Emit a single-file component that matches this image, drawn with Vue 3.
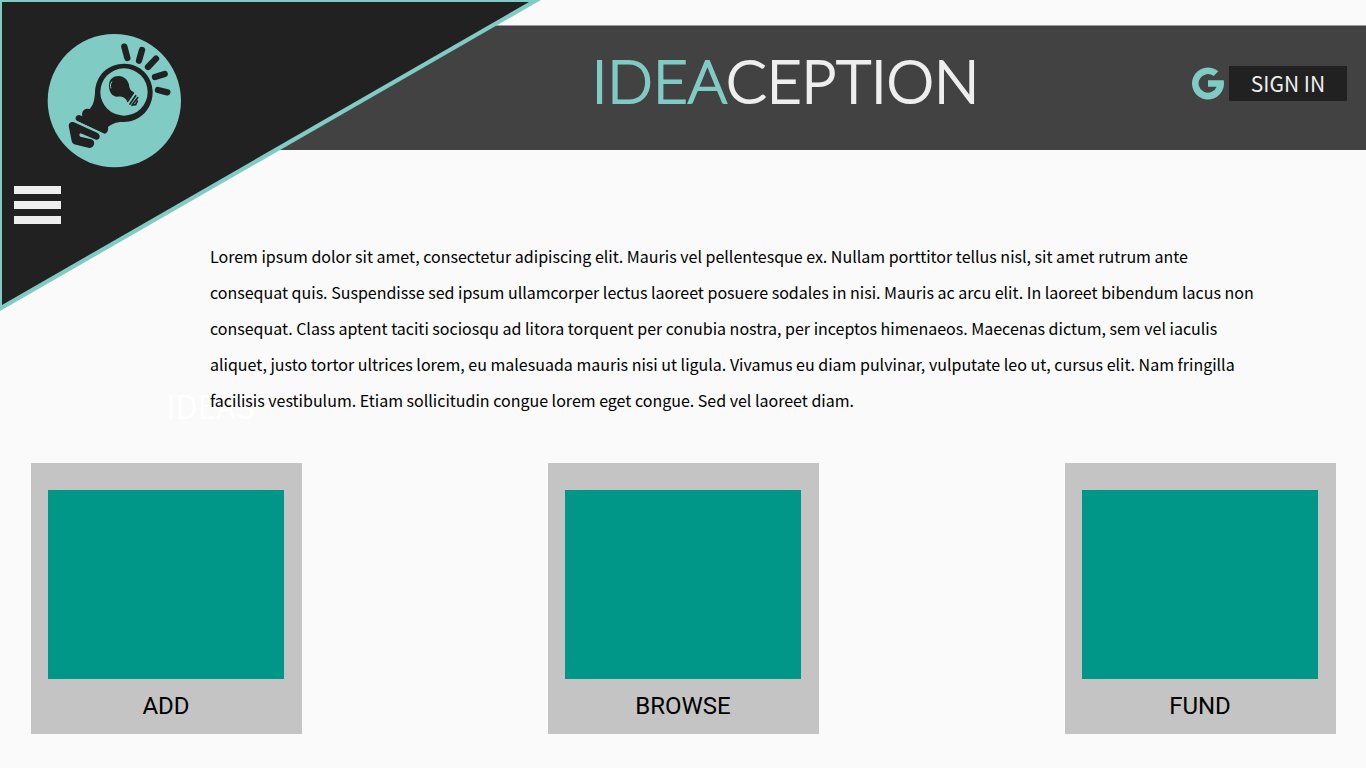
<script setup>
const cards = ['ADD', 'BROWSE', 'FUND']
</script>

<template>
  <div class="page">
    <header class="bar">
      <h1 class="brand"><span class="accent">IDEA</span>CEPTION</h1>
      <div class="account">
        <svg class="google" viewBox="0 0 96 99" aria-hidden="true">
          <path d="M79 13 65 27A28 28 0 1 0 74 59H48V40H95A48 48 0 1 1 79 13Z" />
        </svg>
        <button class="sign-in" type="button">SIGN IN</button>
      </div>
    </header>

    <nav class="corner" aria-label="Main">
      <svg class="triangle" viewBox="0 0 541 311" aria-hidden="true">
        <path class="edge" d="M0 0H541L0 311Z" />
        <path class="fill" d="M2 2H529L2 305Z" />
      </svg>
      <a class="logo" href="#" aria-label="Ideaception home">
        <svg viewBox="21 27 402 402" aria-hidden="true">
          <circle class="disc" cx="223" cy="227" r="200" />
          <g class="rays">
            <path d="M253 65 262 99M306 75 297 107M348 101 324 126M374 147 345 156M354 195 382 202" />
          </g>
          <path class="ink" d="M165 202C167 150 205 116 253 116C300 116 338 154 338 201C338 252 300 291 250 291C229 290 216 297 204 306C206 320 199 329 187 325L110 287C104 281 107 270 118 270L127 274C124 262 131 250 142 251L149 252C161 240 164 222 165 202Z" />
          <circle class="disc" cx="252" cy="201" r="71" />
          <path class="ink" d="M86 302C87 292 94 289 102 292L173 324C184 331 179 346 168 344L122 325C117 325 117 332 121 335L154 343C168 346 164 370 148 369L108 359C100 357 97 355 95 348Z" />
          <path class="gap" d="M104 287 191 327" />
          <path class="ink" d="M207 182C207 163 219 153 236 153C253 154 264 165 267 179C268 190 271 197 281 201L261 227C253 216 245 213 232 215C217 214 207 202 207 182Z" />
          <path class="thread" d="M280 204 263 229M287 212 270 237M293 218 276 241M292 228 287 239 276 240" />
          <path class="shine" d="M213 190C210 183 211 176 216 170" />
        </svg>
      </a>
      <button class="menu" type="button" aria-label="Menu">
        <span></span><span></span><span></span>
      </button>
    </nav>

    <main>
      <section class="intro">
        <h2 class="ghost">IDEAS</h2>
        <p>Lorem ipsum dolor sit amet, consectetur adipiscing elit. Mauris vel pellentesque ex. Nullam porttitor tellus nisl, sit amet rutrum ante consequat quis. Suspendisse sed ipsum ullamcorper lectus laoreet posuere sodales in nisi. Mauris ac arcu elit. In laoreet bibendum lacus non consequat. Class aptent taciti sociosqu ad litora torquent per conubia nostra, per inceptos himenaeos. Maecenas dictum, sem vel iaculis aliquet, justo tortor ultrices lorem, eu malesuada mauris nisi ut ligula. Vivamus eu diam pulvinar, vulputate leo ut, cursus elit. Nam fringilla facilisis vestibulum. Etiam sollicitudin congue lorem eget congue. Sed vel laoreet diam.</p>
      </section>

      <section class="cards">
        <a v-for="label in cards" :key="label" class="card" href="#">
          <span class="thumb"></span>
          <span class="label">{{ label }}</span>
        </a>
      </section>
    </main>
  </div>
</template>

<style>
body {
  background: #fafafa;
}
</style>

<style scoped>
.page {
  position: relative;
  display: flow-root;
  padding-bottom: 34px;
  font-family: "Noto Sans CJK SC", "Noto Sans", sans-serif;
  color: #000;
}
.bar {
  box-sizing: border-box;
  display: flex;
  align-items: center;
  justify-content: flex-end;
  position: relative;
  margin-top: 25px;
  height: 125px;
  padding: 0 19px 10px;
  background: #424242;
  border-top: 1px solid #969a9a;
}
.brand {
  position: absolute;
  left: 205px;
  right: 0;
  top: 18px;
  margin: 0;
  text-align: center;
  font: 300 60px/72px Lato, sans-serif;
  color: #eee;
  -webkit-text-stroke: 2px currentColor;
  stroke-linejoin: round;
}
.accent {
  color: #80cbc4;
}
.account {
  position: relative;
  display: flex;
  align-items: center;
  gap: 5px;
}
.google {
  width: 32px;
  height: 33px;
  fill: #80cbc4;
}
.sign-in {
  width: 118px;
  height: 35px;
  padding: 0;
  border: 0;
  background: #212121;
  color: #eee;
  font: 400 21px/35px "Noto Sans CJK SC", "Noto Sans", sans-serif;
}
.corner {
  position: absolute;
  top: 0;
  left: 0;
  width: 541px;
}
.triangle {
  display: block;
  width: 100%;
}
.edge {
  fill: #80cbc4;
}
.fill {
  fill: #212121;
}
.logo {
  position: absolute;
  top: 34px;
  left: 47px;
  width: 134px;
  height: 134px;
}
.logo svg {
  display: block;
}
.disc {
  fill: #80cbc4;
}
.ink {
  fill: #212121;
}
.rays {
  fill: none;
  stroke: #212121;
  stroke-width: 19;
  stroke-linecap: round;
}
.gap {
  fill: none;
  stroke: #80cbc4;
  stroke-width: 4;
}
.thread {
  fill: none;
  stroke: #212121;
  stroke-width: 5;
  stroke-linecap: round;
}
.shine {
  fill: none;
  stroke: #80cbc4;
  stroke-width: 3;
}
.menu {
  position: absolute;
  top: 186px;
  left: 14px;
  display: flex;
  flex-direction: column;
  gap: 7px;
  width: 47px;
  padding: 0;
  border: 0;
  background: none;
}
.menu span {
  height: 8px;
  background: #eee;
}
.intro {
  position: relative;
  margin-top: 88px;
  padding: 0 100px 0 210px;
}
.intro p {
  position: relative;
  margin: 0;
  font-size: 16px;
  line-height: 36px;
}
.ghost {
  position: absolute;
  left: 166px;
  bottom: -8px;
  margin: 0;
  font: 400 32px/42px "Noto Sans CJK SC", "Noto Sans", sans-serif;
  color: #fff;
}
.cards {
  display: flex;
  justify-content: space-between;
  margin-top: 45px;
  padding: 0 30px 0 31px;
}
.card {
  box-sizing: border-box;
  display: flex;
  flex-direction: column;
  width: 271px;
  padding: 27px 18px 14px 17px;
  background: #c4c4c4;
  color: #000;
  text-decoration: none;
}
.thumb {
  height: 189px;
  background: #009688;
}
.label {
  margin-top: 13px;
  text-align: center;
  font: 400 24px/28px Roboto, sans-serif;
}
</style>
